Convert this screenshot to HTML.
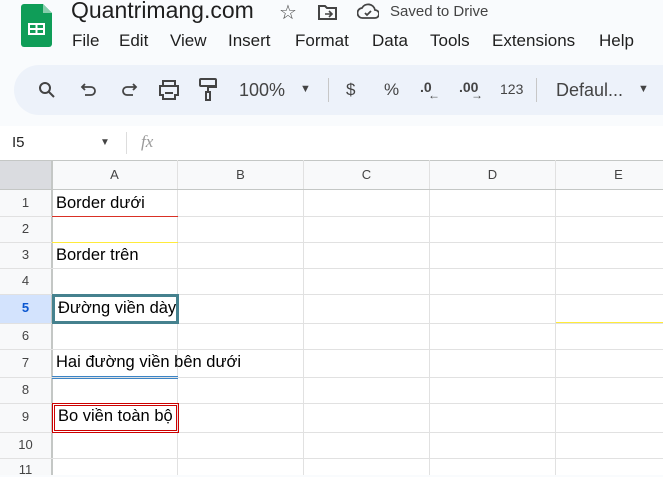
<!DOCTYPE html>
<html><head><meta charset="utf-8"><style>
*{margin:0;padding:0;box-sizing:border-box}
body{width:663px;height:475px;overflow:hidden;background:#f9fbfd;font-family:"Liberation Sans",Arial,sans-serif;position:relative;color:#202124}
.a{position:absolute;white-space:nowrap}
.tb{position:absolute;left:14px;top:65px;width:680px;height:50px;background:#edf2fa;border-radius:25px}
.grid{position:absolute;left:0;top:160px;width:663px;height:315px;background:#fff}
.vl{position:absolute;top:160px;width:1px;height:315px;background:#e1e1e1}
.hl{position:absolute;left:0;width:663px;height:1px;background:#e1e1e1}
.rn{position:absolute;left:0;width:51px;text-align:center;font-size:13px;color:#444}
.cn{position:absolute;top:160px;height:30px;line-height:30px;text-align:center;font-size:13px;color:#444}
.ct{position:absolute;font-size:16.5px;color:#000;white-space:nowrap}
</style></head><body>
<svg class="a" style="left:21px;top:4px" width="31" height="43" viewBox="0 0 31 43"><path d="M3 0h19l9 9v31a3 3 0 0 1-3 3H3a3 3 0 0 1-3-3V3a3 3 0 0 1 3-3z" fill="#0f9d58"/><path d="M22 0v9h9z" fill="#87ceac"/><rect x="7" y="19" width="17" height="12" fill="#fff"/><rect x="9" y="21" width="5.5" height="3" fill="#0f9d58"/><rect x="16.5" y="21" width="5.5" height="3" fill="#0f9d58"/><rect x="9" y="26" width="5.5" height="3" fill="#0f9d58"/><rect x="16.5" y="26" width="5.5" height="3" fill="#0f9d58"/></svg>
<div class="a" style="left:71px;top:-3px;font-size:23px;color:#1f1f1f">Quantrimang.com</div>
<div class="a" style="left:279px;top:0px;font-size:20px;color:#444">☆</div>
<svg class="a" style="left:318px;top:4px" width="20" height="16" viewBox="0 0 20 16"><path d="M1 2h6l2 2h9v11H1z" fill="none" stroke="#444" stroke-width="2"/><path d="M7 10h6M11 7l3 3-3 3" fill="none" stroke="#444" stroke-width="1.6"/></svg>
<svg class="a" style="left:357px;top:3px" width="22" height="17" viewBox="0 0 22 17"><path d="M6 15a5 5 0 0 1-1-10 7 7 0 0 1 13 2 4 4 0 0 1 0 8z" fill="none" stroke="#444" stroke-width="1.8"/><path d="M8 10l2 2 4-4" fill="none" stroke="#444" stroke-width="1.8"/></svg>
<div class="a" style="left:390px;top:3px;font-size:15px;color:#444">Saved to Drive</div>
<div class="a" style="left:72px;top:31px;font-size:17px;color:#1f1f1f">File</div>
<div class="a" style="left:119px;top:31px;font-size:17px;color:#1f1f1f">Edit</div>
<div class="a" style="left:170px;top:31px;font-size:17px;color:#1f1f1f">View</div>
<div class="a" style="left:228px;top:31px;font-size:17px;color:#1f1f1f">Insert</div>
<div class="a" style="left:295px;top:31px;font-size:17px;color:#1f1f1f">Format</div>
<div class="a" style="left:372px;top:31px;font-size:17px;color:#1f1f1f">Data</div>
<div class="a" style="left:430px;top:31px;font-size:17px;color:#1f1f1f">Tools</div>
<div class="a" style="left:492px;top:31px;font-size:17px;color:#1f1f1f">Extensions</div>
<div class="a" style="left:599px;top:31px;font-size:17px;color:#1f1f1f">Help</div>
<div class="tb"></div>
<svg class="a" style="left:38px;top:81px" width="18" height="18" viewBox="0 0 18 18"><circle cx="7" cy="7" r="5" fill="none" stroke="#444" stroke-width="2"/><path d="M11 11l5 5" stroke="#444" stroke-width="2"/></svg>
<svg class="a" style="left:80px;top:81px" width="18" height="18" viewBox="0 0 18 18"><path d="M5 3L2 6l3 3M2 6h9a4 4 0 0 1 0 8H5" fill="none" stroke="#444" stroke-width="1.8"/></svg>
<svg class="a" style="left:120px;top:81px" width="18" height="18" viewBox="0 0 18 18"><path d="M13 3l3 3-3 3M16 6H7a4 4 0 0 0 0 8h6" fill="none" stroke="#444" stroke-width="1.8"/></svg>
<svg class="a" style="left:158px;top:80px" width="22" height="20" viewBox="0 0 22 20"><path d="M5 1h12v5H5zM2 6h18v9h-3v4H5v-4H2z" fill="none" stroke="#444" stroke-width="2"/><path d="M7 13h8" stroke="#444" stroke-width="2"/></svg>
<svg class="a" style="left:198px;top:78px" width="20" height="24" viewBox="0 0 20 24"><rect x="2" y="1" width="16" height="7" rx="1" fill="none" stroke="#444" stroke-width="2"/><path d="M18 5v4H10v5" fill="none" stroke="#444" stroke-width="2"/><rect x="8" y="14" width="4" height="8" fill="none" stroke="#444" stroke-width="2"/></svg>
<div class="a" style="left:239px;top:80px;font-size:18px;color:#444">100%</div>
<div class="a" style="left:300px;top:83px;font-size:11px;color:#444">▼</div>
<div class="a" style="left:328px;top:78px;width:1px;height:24px;background:#c7c7c7"></div>
<div class="a" style="left:346px;top:80px;font-size:17px;color:#444">$</div>
<div class="a" style="left:384px;top:80px;font-size:17px;color:#444">%</div>
<div class="a" style="left:420px;top:79px;font-size:14px;color:#444;font-weight:bold">.0</div>
<div class="a" style="left:428px;top:88px;font-size:12px;color:#444">←</div>
<div class="a" style="left:459px;top:79px;font-size:14px;color:#444;font-weight:bold">.00</div>
<div class="a" style="left:471px;top:88px;font-size:12px;color:#444">→</div>
<div class="a" style="left:500px;top:81px;font-size:14px;color:#444">123</div>
<div class="a" style="left:536px;top:78px;width:1px;height:24px;background:#c7c7c7"></div>
<div class="a" style="left:556px;top:80px;font-size:18px;color:#444">Defaul...</div>
<div class="a" style="left:638px;top:83px;font-size:11px;color:#444">▼</div>
<div class="a" style="left:0;top:126px;width:663px;height:34px;background:#fff"></div>
<div class="a" style="left:12px;top:134px;font-size:15px;color:#222">I5</div>
<div class="a" style="left:100px;top:137px;font-size:10px;color:#444">▼</div>
<div class="a" style="left:126px;top:132px;width:1px;height:22px;background:#ddd"></div>
<div class="a" style="left:141px;top:132px;font-size:17px;color:#999;font-style:italic;font-family:'Liberation Serif',serif">fx</div>
<div class="grid"></div>
<div class="a" style="left:0;top:160px;width:663px;height:30px;background:#f8f9fa"></div>
<div class="a" style="left:0;top:160px;width:51px;height:30px;background:#dadce0"></div>
<div class="a" style="left:0;top:160px;width:663px;height:1px;background:#c4c7c5"></div>
<div class="a" style="left:0;top:190px;width:51px;height:285px;background:#f8f9fa"></div>
<div class="a" style="left:0;top:294px;width:51px;height:29px;background:#d3e3fd"></div>
<div class="a" style="left:51px;top:160px;width:2px;height:315px;background:#c4c7c5"></div>
<div class="vl" style="left:177px"></div><div class="vl" style="left:303px"></div><div class="vl" style="left:429px"></div><div class="vl" style="left:555px"></div>
<div class="hl" style="top:189px;background:#c4c7c5"></div>
<div class="hl" style="top:216px"></div><div class="hl" style="top:242px"></div><div class="hl" style="top:268px"></div><div class="hl" style="top:294px"></div><div class="hl" style="top:323px"></div><div class="hl" style="top:349px"></div><div class="hl" style="top:377px"></div><div class="hl" style="top:403px"></div><div class="hl" style="top:432px"></div><div class="hl" style="top:458px"></div>
<div class="cn" style="left:52px;width:125px">A</div><div class="cn" style="left:178px;width:125px">B</div><div class="cn" style="left:304px;width:125px">C</div><div class="cn" style="left:430px;width:125px">D</div><div class="cn" style="left:556px;width:125px">E</div>
<div class="rn" style="top:195px">1</div><div class="rn" style="top:221px">2</div><div class="rn" style="top:247px">3</div><div class="rn" style="top:273px">4</div><div class="rn" style="top:300px;font-weight:bold;color:#0b57d0">5</div><div class="rn" style="top:328px">6</div><div class="rn" style="top:355px">7</div><div class="rn" style="top:382px">8</div><div class="rn" style="top:409px">9</div><div class="rn" style="top:437px">10</div><div class="rn" style="top:462px">11</div>
<div class="a" style="left:52px;top:216px;width:126px;height:1px;background:#d93025"></div>
<div class="a" style="left:52px;top:242px;width:126px;height:1px;background:#ffeb3b"></div>
<div class="a" style="left:556px;top:322px;width:107px;height:1px;background:#ffeb3b"></div>
<div class="a" style="left:52px;top:294px;width:127px;height:30px;border:3px solid #45818e"></div>
<div class="a" style="left:52px;top:376px;width:126px;height:1px;background:#3d85c6"></div>
<div class="a" style="left:52px;top:378px;width:126px;height:1px;background:#3d85c6"></div>
<div class="a" style="left:52px;top:403px;width:127px;height:30px;border:1px solid #cc0000"></div>
<div class="a" style="left:54px;top:405px;width:123px;height:26px;border:1px solid #cc0000"></div>
<div class="ct" style="left:56px;top:194px">Border dưới</div>
<div class="ct" style="left:56px;top:246px">Border trên</div>
<div class="ct" style="left:58px;top:299px;width:120px;overflow:hidden">Đường viền dày</div>
<div class="ct" style="left:56px;top:353px">Hai đường viền bên dưới</div>
<div class="ct" style="left:58px;top:407px">Bo viền toàn bộ</div>
</body></html>
